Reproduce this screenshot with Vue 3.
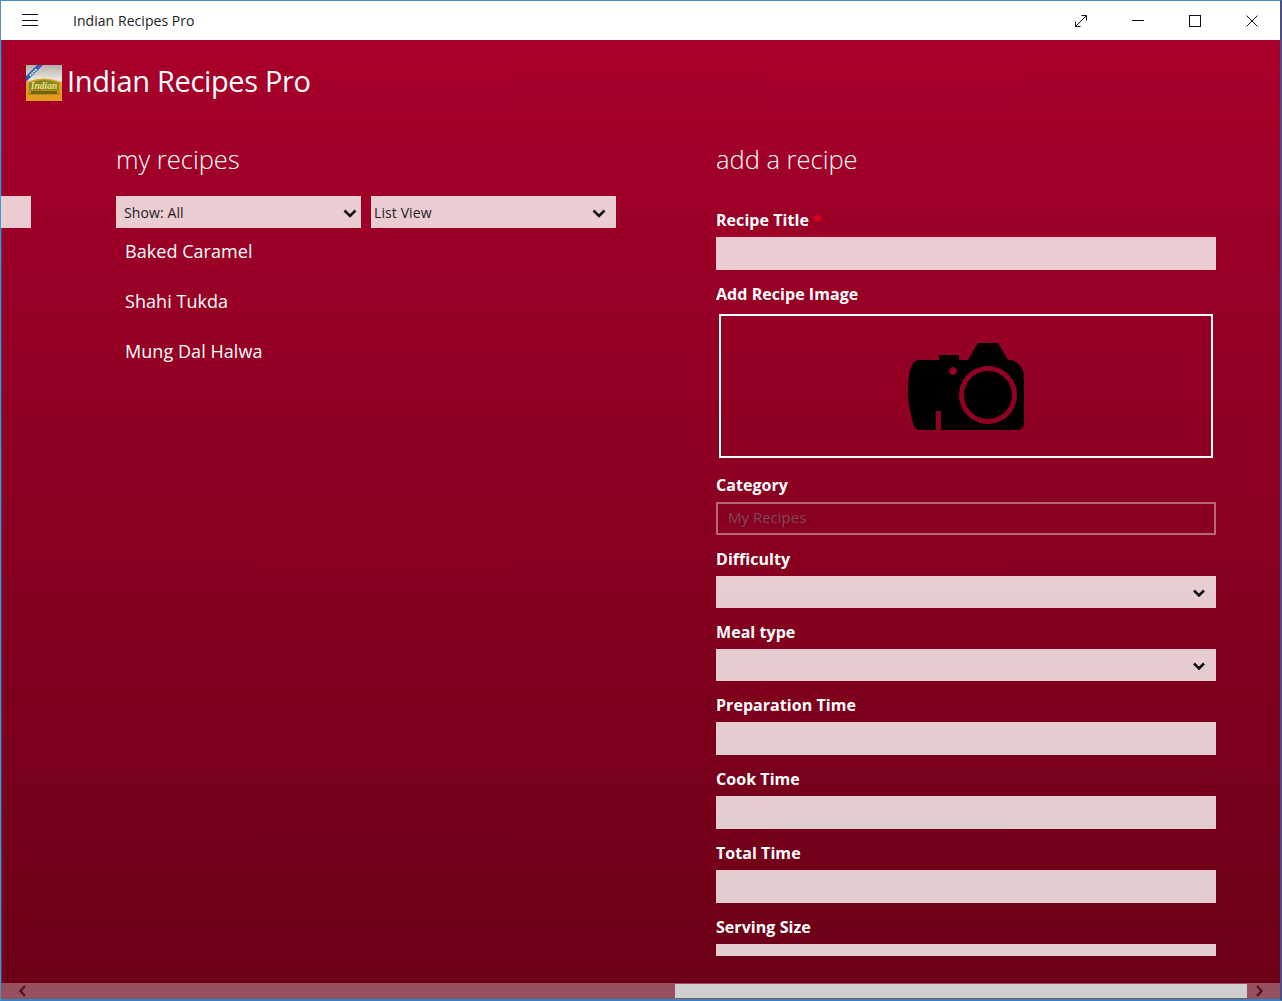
<script setup>
const recipes = ['Baked Caramel', 'Shahi Tukda', 'Mung Dal Halwa']
const lower = [
  { label: 'Difficulty', type: 'select' },
  { label: 'Meal type', type: 'select' },
  { label: 'Preparation Time', type: 'input' },
  { label: 'Cook Time', type: 'input' },
  { label: 'Total Time', type: 'input' },
  { label: 'Serving Size', type: 'input' }
]
</script>

<template>
  <div class="window">
    <header class="titlebar">
      <button class="hamburger" aria-label="Menu">
        <svg width="16" height="13" viewBox="0 0 16 13"><path d="M0 .5h16M0 6.5h16M0 11.5h16" stroke="#111" fill="none" /></svg>
      </button>
      <span class="wintitle">Indian Recipes Pro</span>
      <div class="controls">
        <svg class="ctl" width="14" height="14" viewBox="0 0 14 14"><path d="M1.5 12.5 12.5 1.5M7.5 1.5h5v5M1.5 7.5v5h5" stroke="#111" fill="none" /></svg>
        <svg class="ctl" width="14" height="14" viewBox="0 0 14 14"><path d="M1 6.5h12" stroke="#111" fill="none" /></svg>
        <svg class="ctl" width="14" height="14" viewBox="0 0 14 14"><rect x="1.5" y="1.5" width="11" height="11" stroke="#111" fill="none" /></svg>
        <svg class="ctl" width="14" height="14" viewBox="0 0 14 14"><path d="M1.5 1.5 12.5 12.5M12.5 1.5 1.5 12.5" stroke="#111" fill="none" /></svg>
      </div>
    </header>

    <main class="content">
      <div class="brand">
        <svg class="logo" width="36" height="36" viewBox="0 0 36 36">
          <defs>
            <linearGradient id="sky" x1="0" y1="0" x2="0" y2="1"><stop offset="0" stop-color="#b3afa8" /><stop offset=".4" stop-color="#e9e6de" /><stop offset="1" stop-color="#e6e1d6" /></linearGradient>
          </defs>
          <rect width="36" height="36" fill="url(#sky)" />
          <path d="M0 36V17Q18 10 36 17V36Z" fill="#d8a325" />
          <path d="M3 18Q18 12 33 18V25H3Z" fill="#86861f" />
          <text x="18" y="23.5" text-anchor="middle" class="logotext">Indian</text>
          <rect x="2" y="25" width="32" height="5" fill="#c28a1a" />
          <rect x="5" y="26" width="26" height="3" fill="#6d6416" />
          <rect y="30" width="36" height="6" fill="#e39a20" />
          <path d="M0 11 11 0h6L0 17Z" fill="#2f5fb0" />
          <path d="M4 10.5 10.5 4" stroke="#fff" stroke-width="2" stroke-dasharray="1.5 1" />
        </svg>
        <h1 class="apptitle">Indian Recipes Pro</h1>
      </div>

      <div class="columns">
        <div class="stub"></div>

        <section class="left">
          <h2 class="heading">my recipes</h2>
          <div class="filters">
            <div class="select filter"><span>Show: All</span>
              <svg width="14" height="9" viewBox="0 0 14 9"><path d="M1.5 1.5 7 7l5.5-5.5" stroke="#111" stroke-width="2.6" fill="none" /></svg>
            </div>
            <div class="select filter tight"><span>List View</span>
              <svg width="14" height="9" viewBox="0 0 14 9"><path d="M1.5 1.5 7 7l5.5-5.5" stroke="#111" stroke-width="2.6" fill="none" /></svg>
            </div>
          </div>
          <ul class="recipes">
            <li v-for="r in recipes" :key="r">{{ r }}</li>
          </ul>
        </section>

        <section class="right">
          <h2 class="heading">add a recipe</h2>
          <form class="form">
            <div class="field">
              <label>Recipe Title <span class="req">*</span></label>
              <div class="box"></div>
            </div>
            <div class="field">
              <label>Add Recipe Image</label>
              <div class="imagebox">
                <svg width="116" height="87" viewBox="0 0 116 87">
                  <path fill="#000" fill-rule="evenodd" d="M12 17H31V12H51V17H60L70 0H90L100 17H103Q116 21 116 35V80Q116 87 109 87H33V68H28V87H12Q6 87 5 80Q0 62 0 50Q0 30 4 22Q6 17 12 17ZM80 23a29 29 0 1 0 .01 0ZM45 24a4 4 0 1 0 .01 0Z" />
                  <circle cx="80" cy="52" r="24" fill="#000" />
                </svg>
              </div>
            </div>
            <div class="field">
              <label>Category</label>
              <input class="category" placeholder="My Recipes" disabled />
            </div>
            <div v-for="f in lower" :key="f.label" class="field">
              <label>{{ f.label }}</label>
              <div v-if="f.type === 'select'" class="select plain">
                <svg width="14" height="9" viewBox="0 0 14 9"><path d="M2 1.5 7 6.5l5-5" stroke="#111" stroke-width="2.6" fill="none" /></svg>
              </div>
              <div v-else class="box"></div>
            </div>
          </form>
        </section>
      </div>
    </main>

    <div class="scrollbar">
      <span class="arrow"><svg width="9" height="12" viewBox="0 0 9 12"><path d="M7 1 2.5 6 7 11" stroke="#4d1526" stroke-width="2.4" fill="none" /></svg></span>
      <div class="track"></div>
      <div class="thumb"></div>
      <span class="arrow end"><svg width="9" height="12" viewBox="0 0 9 12"><path d="M2 1 6.5 6 2 11" stroke="#4d1526" stroke-width="2.4" fill="none" /></svg></span>
    </div>
  </div>
</template>

<style scoped>
.window {
  width: 1282px;
  height: 1001px;
  box-sizing: border-box;
  border-top: 1px solid #3d8fc4;
  border-bottom: 2px solid #3385c2;
  border-left: 1px solid #4f8fc4;
  border-right: 2px solid #4a4f86;
  display: flex;
  flex-direction: column;
  overflow: hidden;
  font-family: "Open Sans", "Noto Sans", sans-serif;
  color: #fff;
  background: #6c0016;
}
.titlebar {
  height: 39px;
  flex: none;
  background: #fff;
  display: flex;
  align-items: center;
  color: #222;
}
.hamburger {
  width: 72px;
  height: 39px;
  padding: 0 0 0 21px;
  border: 0;
  background: none;
  text-align: left;
  display: flex;
  align-items: center;
}
.wintitle {
  font-size: 14px;
  letter-spacing: 0.05px;
}
.controls {
  margin-left: auto;
  display: flex;
  gap: 43px;
  padding-right: 21px;
}
.content {
  flex: 1;
  min-height: 0;
  display: flex;
  flex-direction: column;
  background: linear-gradient(#a8002a, #6c0016);
  box-shadow: inset 1px 0 #4a3f80;
  overflow: hidden;
}
.brand {
  height: 84px;
  flex: none;
  display: flex;
  align-items: flex-start;
  padding: 25px 0 0 25px;
  box-sizing: border-box;
}
.logo { flex: none; }
.logotext {
  font-family: "Liberation Serif", serif;
  font-size: 9.5px;
  font-weight: 700;
  font-style: italic;
  fill: #efe08a;
}
.apptitle {
  margin: -4px 0 0 5px;
  font-size: 29px;
  line-height: 40px;
  font-weight: 400;
  letter-spacing: -0.35px;
}
.columns {
  display: flex;
  flex: 1;
  min-height: 0;
}
.stub {
  width: 30px;
  height: 32px;
  margin-top: 72px;
  flex: none;
  background: rgba(255, 255, 255, 0.8);
}
.left {
  width: 500px;
  margin-left: 85px;
  flex: none;
}
.right {
  width: 500px;
  margin-left: 100px;
  flex: none;
  display: flex;
  flex-direction: column;
  min-height: 0;
  height: 832px;
}
.heading {
  margin: 0;
  height: 72px;
  padding-top: 15px;
  box-sizing: border-box;
  font-size: 25.5px;
  line-height: 40px;
  font-weight: 300;
  letter-spacing: 0;
}
.filters {
  display: flex;
  gap: 10px;
}
.select {
  display: flex;
  align-items: center;
  justify-content: flex-end;
  height: 32px;
  padding-right: 10px;
  box-sizing: border-box;
  background: rgba(255, 255, 255, 0.8);
  color: #1c1c1c;
}
.select svg { margin-top: 2px; flex: none; }
.filter {
  width: 245px;
  justify-content: space-between;
  padding-left: 8px;
  padding-right: 3px;
  font-size: 14px;
  letter-spacing: 0.1px;
}
.filter svg { margin-right: 1px; }
.filter.tight { padding-left: 3px; padding-right: 9px; }
.recipes {
  list-style: none;
  margin: 0;
  padding: 0 0 0 9px;
}
.recipes li {
  height: 50px;
  line-height: 46px;
  font-size: 18px;
  letter-spacing: 0.05px;
}
.form {
  flex: 1;
  min-height: 0;
  overflow: hidden;
}
.field { padding-top: 12px; }
.field label {
  display: block;
  height: 24px;
  line-height: 24px;
  margin-bottom: 5px;
  font-size: 16px;
  font-weight: 700;
  letter-spacing: 0.05px;
}
.req { color: #e8001c; }
.box {
  height: 33px;
  background: rgba(255, 255, 255, 0.8);
}
.imagebox {
  width: 494px;
  height: 144px;
  margin: 8px 3px 3px;
  box-sizing: border-box;
  border: 2px solid #fff;
  display: flex;
  align-items: center;
  justify-content: center;
}
.imagebox svg { margin-top: 1px; }
.category {
  display: block;
  width: 100%;
  height: 33px;
  box-sizing: border-box;
  margin: 0;
  border: 2px solid rgba(255, 255, 255, 0.4);
  background: transparent;
  padding: 0 10px 3px;
  font: inherit;
  font-size: 15px;
  letter-spacing: 0;
}
.category::placeholder { color: #7a4a58; opacity: 1; }
.scrollbar {
  height: 16px;
  flex: none;
  display: flex;
  background: #96505f;
}
.arrow {
  width: 30px;
  flex: none;
  display: flex;
  align-items: center;
  padding-left: 17px;
  box-sizing: border-box;
}
.arrow.end { width: 33px; padding-left: 8px; }
.track { width: 644px; flex: none; }
.thumb { flex: 1; margin: 1px 0; background: #d0cfcf; }
</style>

<style>
html, body { margin: 0; padding: 0; overflow: hidden; }
</style>
